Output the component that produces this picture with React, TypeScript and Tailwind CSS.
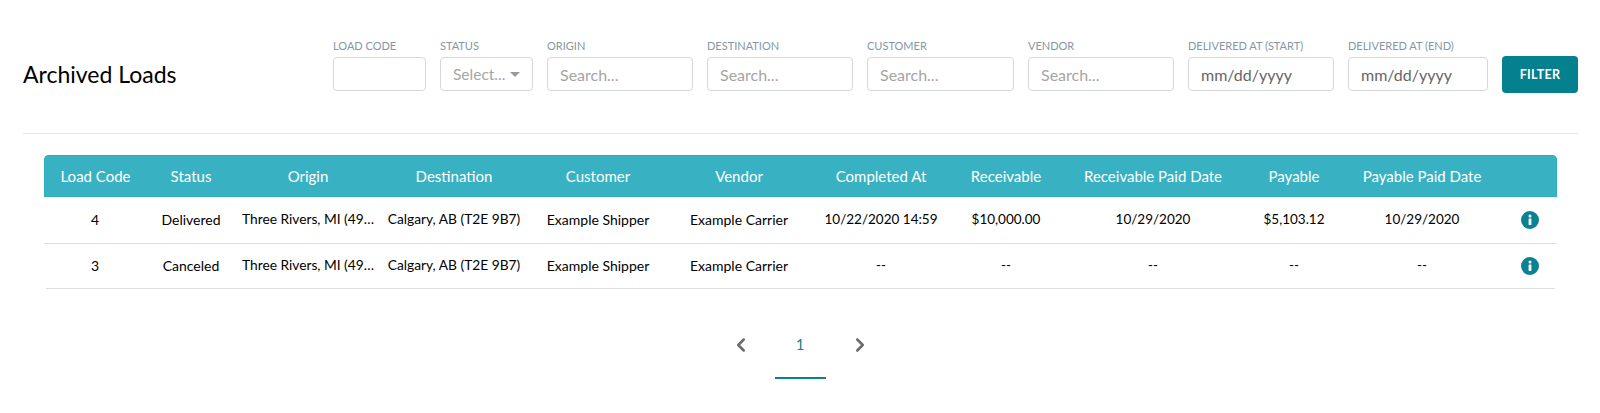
import { ChevronLeft, ChevronRight } from "lucide-react";

const filters = [
    { label: "LOAD CODE", width: "w-[93px]", placeholder: "" },
    { label: "STATUS", width: "w-[93px]", select: true, placeholder: "Select..." },
    { label: "ORIGIN", width: "w-[146px]", placeholder: "Search..." },
    { label: "DESTINATION", width: "w-[146px]", placeholder: "Search..." },
    { label: "CUSTOMER", width: "w-[147px]", placeholder: "Search..." },
    { label: "VENDOR", width: "w-[146px]", placeholder: "Search..." },
    { label: "DELIVERED AT (START)", width: "w-[146px]", placeholder: "mm/dd/yyyy", date: true },
    { label: "DELIVERED AT (END)", width: "w-[140px]", placeholder: "mm/dd/yyyy", date: true },
];

const columns = [
    { name: "Load Code", width: "w-[102px]" },
    { name: "Status", width: "w-[90px]" },
    { name: "Origin", width: "w-[144px]" },
    { name: "Destination", width: "w-[148px]" },
    { name: "Customer", width: "w-[140px]" },
    { name: "Vendor", width: "w-[142px]" },
    { name: "Completed At", width: "w-[142px]" },
    { name: "Receivable", width: "w-[108px]" },
    { name: "Receivable Paid Date", width: "w-[186px]" },
    { name: "Payable", width: "w-[96px]" },
    { name: "Payable Paid Date", width: "w-[160px]" },
    { name: "", width: "w-[55px]" },
];

const rows = [
    ["4", "Delivered", "Three Rivers, MI (49093)", "Calgary, AB (T2E 9B7)", "Example Shipper", "Example Carrier", "10/22/2020 14:59", "$10,000.00", "10/29/2020", "$5,103.12", "10/29/2020"],
    ["3", "Canceled", "Three Rivers, MI (49093)", "Calgary, AB (T2E 9B7)", "Example Shipper", "Example Carrier", "--", "--", "--", "--", "--"],
];

const InfoIcon = () => (
    <svg width="18" height="18" viewBox="0 0 18 18" className="mx-auto">
        <circle cx="9" cy="9" r="9" fill="#0b8294" />
        <circle cx="9" cy="5" r="1.5" fill="#fff" />
        <rect x="7.6" y="7.5" width="2.8" height="6.5" rx="0.4" fill="#fff" />
    </svg>
);

export default function App() {
    return (
        <div className="h-[413px] w-[1600px] overflow-hidden bg-white font-['Lato','Open_Sans',sans-serif] text-black">
            <div className="mr-[22px] ml-[23px] flex h-[134px] items-start justify-between border-b border-[#e6e6e6]">
                <h1 className="mt-[59px] text-[23px] leading-[30px] font-normal">Archived Loads</h1>
                <div className="mt-[40px] flex items-start gap-[14px]">
                    {filters.map((f) => (
                        <label key={f.label} className="flex flex-col">
                            <span className="mb-[5px] text-[11px] leading-[12px] text-[#8497a5]">{f.label}</span>
                            <div className={`relative ${f.width}`}>
                                <input
                                    readOnly
                                    placeholder={f.placeholder}
                                    className={`h-[34px] w-full rounded-[4px] border border-[#d5d8da] bg-white px-[12px] outline-none ${f.select ? "text-[15.5px]" : "text-[16px]"} ${f.date ? "placeholder:text-[#666]" : "placeholder:text-[#a5a5a5]"}`}
                                />
                                {f.select && <span className="absolute top-[15px] right-[13px] h-0 w-0 border-x-[5px] border-t-[5px] border-x-transparent border-t-[#999]" />}
                            </div>
                        </label>
                    ))}
                    <button className="mt-[16px] h-[37px] w-[76px] rounded-[4px] bg-[#04808f] pt-[1px] text-[12.5px] font-bold tracking-[0.3px] text-white">FILTER</button>
                </div>
            </div>

            <div className="mt-[21px] ml-[44px] w-[1513px]">
                <table className="w-full table-fixed border-separate border-spacing-0 text-[14px]">
                    <thead>
                        <tr className="h-[42px] bg-[#38b2c2]">
                            {columns.map((c, i) => (
                                <th
                                    key={i}
                                    className={`${c.width} border-y border-[#2bb0c2] px-[2px] text-center text-[15px] font-normal text-white ${i === 0 ? "rounded-tl-[5px] border-l" : ""} ${i === columns.length - 1 ? "rounded-tr-[5px] border-r" : ""}`}
                                >
                                    {c.name}
                                </th>
                            ))}
                        </tr>
                    </thead>
                    <tbody>
                        {rows.map((row, r) => (
                            <tr key={row[0]} className={r === 0 ? "h-[47px]" : "h-[44px]"}>
                                {row.map((cell, i) => (
                                    <td key={i} className={`truncate pb-[1px] text-center ${i === 2 ? "pr-[2px] pl-[6px]" : "px-[6px]"} ${i >= 6 ? "text-[13.5px]" : i === 2 || i === 3 ? "text-[13.75px]" : "text-[14px]"} ${r === 0 ? "border-b border-[#dedede]" : ""}`}>
                                        {cell}
                                    </td>
                                ))}
                                <td className={`pb-[1px] ${r === 0 ? "border-b border-[#dedede]" : ""}`}>
                                    <InfoIcon />
                                </td>
                            </tr>
                        ))}
                    </tbody>
                </table>
                <div className="mx-[2px] border-b border-[#dedede]" />
            </div>

            <div className="mt-[43px] flex justify-center">
                <div className="flex items-start">
                    <ChevronLeft className="mt-[2px] h-[22px] w-[22px] text-[#6b6b6b]" strokeWidth={2.75} />
                    <div className="mx-[23px] flex w-[51px] flex-col items-center border-b-2 border-[#0b8294] pb-[21px] text-[15px] leading-[24px] text-[#0b8294]">1</div>
                    <ChevronRight className="mt-[2px] h-[22px] w-[22px] text-[#6b6b6b]" strokeWidth={2.75} />
                </div>
            </div>
        </div>
    );
}
